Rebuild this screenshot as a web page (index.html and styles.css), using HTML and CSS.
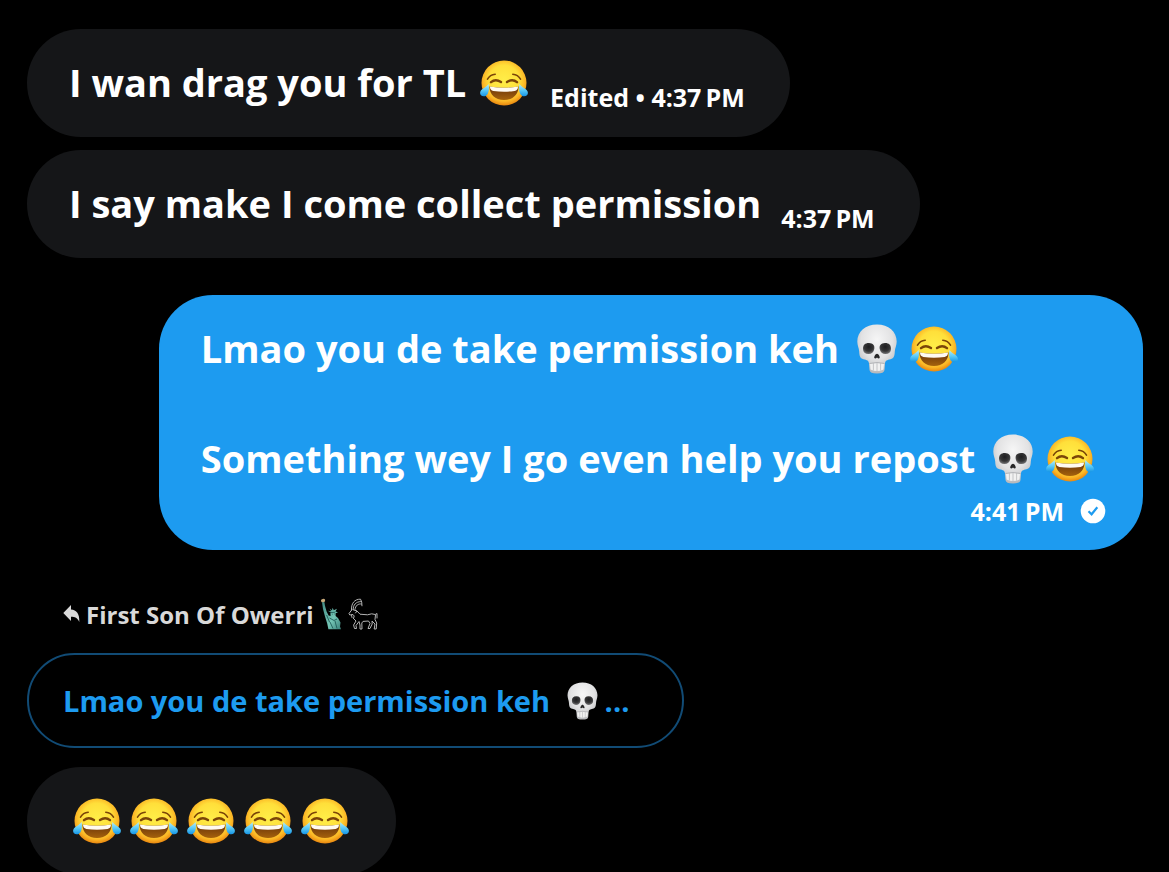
FILE: index.html
```
<!DOCTYPE html>
<html lang="en">
<head>
<meta charset="UTF-8" />
<meta name="viewport" content="width=device-width, initial-scale=1" />
<title>Messages</title>
<link rel="stylesheet" href="styles.css">
</head>
<body>
  <svg class="sprites" aria-hidden="true">
    <defs>
      <radialGradient id="face" cx="50%" cy="44%" r="56%">
        <stop offset="0" stop-color="#ffee48" />
        <stop offset="0.6" stop-color="#ffdf3a" />
        <stop offset="0.84" stop-color="#fbb525" />
        <stop offset="1" stop-color="#e8860f" />
      </radialGradient>
      <linearGradient id="tear" x1="0" y1="0" x2="0" y2="1">
        <stop offset="0" stop-color="#b4ecfb" />
        <stop offset="0.5" stop-color="#5ccbf7" />
        <stop offset="1" stop-color="#1595e6" />
      </linearGradient>
      <linearGradient id="mouth" x1="0" y1="0" x2="0" y2="1">
        <stop offset="0" stop-color="#68330a" />
        <stop offset="1" stop-color="#a5620c" />
      </linearGradient>
      <radialGradient id="bone" cx="50%" cy="32%" r="66%">
        <stop offset="0" stop-color="#f6f6f6" />
        <stop offset="0.6" stop-color="#e2e2e3" />
        <stop offset="1" stop-color="#b9babd" />
      </radialGradient>
      <radialGradient id="socket" cx="50%" cy="35%" r="65%">
        <stop offset="0" stop-color="#1d1d1f" />
        <stop offset="0.6" stop-color="#353536" />
        <stop offset="1" stop-color="#777779" />
      </radialGradient>
      <linearGradient id="copper" x1="0" y1="0" x2="1" y2="1">
        <stop offset="0" stop-color="#438b84" />
        <stop offset="0.6" stop-color="#74c5b5" />
        <stop offset="1" stop-color="#3b827b" />
      </linearGradient>
    </defs>

    <symbol id="joy" viewBox="0 0 48 50">
      <circle cx="24" cy="25" r="22.5" fill="url(#face)" />
      <g fill="none" stroke="#7b4508" stroke-linecap="round">
        <path d="M7.5 21.2Q10 16.5 15.2 16.2M32.8 16.2Q38 16.5 40.5 21.2" stroke-width="1.6" />
        <path d="M11 24.2Q15.5 20.4 21 24M27 24Q32.5 20.4 37 24.2" stroke-width="2.4" />
      </g>
      <path d="M9.5 28.5Q24 31 38.5 28.5C38.5 36.5 33 42 24 42S9.5 36.5 9.5 28.5Z" fill="url(#mouth)" />
      <path d="M10 28.6Q24 31 38 28.6Q38.2 32.2 34.6 32.9Q24 34.4 13.4 32.9Q9.8 32.2 10 28.6Z" fill="#fffaf1" />
      <path d="M8.6 26C9.6 31 8.6 38.2 3.9 38.3C.6 38.4-.6 35.6.5 33.2C1.8 30.5 5.8 29.6 8.6 26Z" fill="url(#tear)" />
      <path d="M39.4 26C38.4 31 39.4 38.2 44.1 38.3C47.4 38.4 48.6 35.6 47.5 33.2C46.2 30.5 42.2 29.6 39.4 26Z" fill="url(#tear)" />
    </symbol>

    <symbol id="skull" viewBox="0 0 48 50">
      <path d="M24 .5C12.5.5 4.3 7.5 4.3 17.5C4.3 21.5 6 24 6.2 27.5C6.4 31.5 6.8 34.2 10.5 35.2C14 36 15.7 36.4 16 39.5L16.5 46Q16.8 49.5 24 49.5T31.5 46L32 39.5C32.3 36.4 34 36 37.5 35.2C41.2 34.2 41.6 31.5 41.8 27.5C42 24 43.7 21.5 43.7 17.5C43.7 7.5 35.5.5 24 .5Z" fill="url(#bone)" />
      <path d="M10 25C9.8 20.8 12.2 18.8 16 18.9C20 19 22 21.2 21.3 25C20.6 28.5 18.5 30.2 15.4 30.1C12.2 30 10.1 28.3 10 25Z" fill="url(#socket)" />
      <path d="M38 25C38.2 20.8 35.8 18.8 32 18.9C28 19 26 21.2 26.7 25C27.4 28.5 29.5 30.2 32.6 30.1C35.8 30 37.9 28.3 38 25Z" fill="url(#socket)" />
      <path d="M24 29.8C22.5 29.8 20.7 33.2 21.4 34.1C22 34.8 23.3 34.2 24 33.5C24.7 34.2 26 34.8 26.6 34.1C27.3 33.2 25.5 29.8 24 29.8Z" fill="#262627" />
      <path d="M17 39.5Q24 38 31 39.5L30.4 45.5Q24 48.5 17.6 45.5Z" fill="#f1f1f1" />
      <path d="M16.5 39.5Q24 37.7 31.5 39.5" fill="none" stroke="#a5a6aa" stroke-width=".8" />
      <path d="M20.4 39V46.5M24 38.6V47M27.6 39V46.5" stroke="#b9babd" stroke-width=".8" />
    </symbol>

    <symbol id="liberty" viewBox="0 0 22 32">
      <path d="M1.2 3.5Q.4 1.8 2 1.2Q4.4.2 5.2 2Q5 3.7 4 4.4H2Z" fill="#c9a979" />
      <path d="M2 4.2H4.4L4.9 7.5L6.6 13.5L8.6 17.6L10.6 18L10.4 15.5L10.8 14.2L7.6 12.8L11.2 13.2L9.6 10.6L12 12.4L12.6 9.8L13.8 12.2L17 10.8L15.4 13.6L18 14.2L15.6 15.2L15.6 18L18 20L20.5 24.5L20 28.5L21 31.2H8.4L7.2 25.5L5 18.5L3 11Z" fill="url(#copper)" />
      <path d="M11 14.6L15.2 14.2M12 16.2H12.6M14 16H14.6M9.5 20L14 22.5L17 21M10 24L13 30.5M15 23L17 30.5M6.6 17L9.5 24" fill="none" stroke="#1f5c58" stroke-width=".9" />
    </symbol>

    <symbol id="goat" viewBox="0 0 30 32">
      <g fill="none" stroke="#b4b4b4" stroke-width="1" stroke-linecap="round" stroke-linejoin="round">
        <path d="M3.5 12C3 5.5 6.5 1 12.5 1.2Q14.2 3.4 14 7.8M5.2 11.5C5 7 8 3.6 12.5 3.6M7 11.5C7.5 7.5 10 5.4 13.4 6" />
        <path d="M3.8 11.8L1 15.5L1.8 17L5 16.5L6.2 18L5.5 20.5M5.2 11.8L9 13L7.5 15M9 13L12 16.2L19.5 16.8Q24 15 27.2 16.5L29 15.5L29 20M3.5 17L4 19.5" />
        <path d="M5.5 20.5L8 23L5.6 27L6.5 30.5H8.5L8 27.5L11 23.5L12 27V31H14L13.8 25L15 23.4L20.5 23L22 25.5L20 30.5H22L24.2 26L24 23L27 26L26.2 31H28.2L28.7 25L27 21.5L27.5 17" />
      </g>
    </symbol>
  </svg>

  <main class="chat" aria-label="Conversation">
    <article class="bubble received">
      <p class="text">I wan drag you for TL <svg class="emoji" role="img" aria-label="Laughing with tears"><use href="#joy" /></svg></p>
      <span class="meta">Edited • <time>4:37&#8201;PM</time></span>
    </article>

    <article class="bubble received">
      <p class="text">I say make I come collect permission</p>
      <span class="meta"><time>4:37&#8201;PM</time></span>
    </article>

    <article class="bubble sent">
      <p class="text">Lmao you de take permission keh <svg class="emoji" role="img" aria-label="Skull"><use href="#skull" /></svg><svg class="emoji" role="img" aria-label="Laughing with tears"><use href="#joy" /></svg></p>
      <p class="text">Something wey I go even help you repost <svg class="emoji" role="img" aria-label="Skull"><use href="#skull" /></svg><svg class="emoji" role="img" aria-label="Laughing with tears"><use href="#joy" /></svg></p>
      <span class="meta">
        <time>4:41&#8201;PM</time>
        <svg class="status" viewBox="0 0 26 26" role="img" aria-label="Sent">
          <circle cx="13" cy="13" r="12.3" fill="#fff" />
          <path d="M8.5 13.3L11.6 16.3L17.3 9.2" fill="none" stroke="#1d9bf0" stroke-width="2.2" />
        </svg>
      </span>
    </article>

    <div class="reply-to">
      <svg class="reply-icon" viewBox="0 0 17 18" aria-hidden="true">
        <path d="M8 0V4.5C13.5 5 16.7 8.5 16.3 17C14.5 13 12 11.8 8 11.8V16L.3 8Z" fill="#d9d9d9" />
      </svg>
      <span>First Son Of Owerri</span>
      <svg class="liberty" role="img" aria-label="Statue of Liberty"><use href="#liberty" /></svg>
      <svg class="goat" role="img" aria-label="Goat"><use href="#goat" /></svg>
    </div>

    <blockquote class="quote">Lmao you de take permission keh <svg class="emoji" role="img" aria-label="Skull"><use href="#skull" /></svg>...</blockquote>

    <article class="bubble received">
      <p class="text" aria-label="Five laughing faces"><svg class="emoji"><use href="#joy" /></svg><svg class="emoji"><use href="#joy" /></svg><svg class="emoji"><use href="#joy" /></svg><svg class="emoji"><use href="#joy" /></svg><svg class="emoji"><use href="#joy" /></svg></p>
    </article>
  </main>
</body>
</html>
```
FILE: styles.css
```
:root {
  --background: #000000;
  --received-bg: #151618;
  --sent-bg: #1d9bf0;
  --quote-border: #114b75;
  --primary-text: #ffffff;
  --secondary-text: #d9d9d9;
  --font-family: 'Open Sans', 'Noto Sans', sans-serif;
}
*, *::before, *::after {
  box-sizing: border-box;
}
body {
  margin: 0;
  background-color: var(--background);
  color: var(--primary-text);
  font-family: var(--font-family);
  font-weight: 700;
}
.sprites {
  display: block;
  width: 0;
  height: 0;
}
.chat {
  display: flex;
  flex-direction: column;
  align-items: flex-start;
  height: 100vh;
  padding: 29px 26px 0 27px;
  overflow: hidden;
}
.bubble {
  display: flex;
  flex-shrink: 0;
  align-items: flex-end;
  gap: 20px;
  border-radius: 54px;
}
.received {
  min-height: 108px;
  margin-bottom: 13px;
  padding: 26px 45px 27px 42px;
  background-color: var(--received-bg);
}
.sent {
  flex-direction: column;
  align-items: flex-start;
  align-self: flex-end;
  gap: 0;
  margin: 24px 0 48px;
  padding: 26px 37px 26px 42px;
  background-color: var(--sent-bg);
}
.text {
  margin: 0;
  font-size: 38px;
  line-height: 55px;
}
.sent .text {
  padding-right: 7px;
}
.sent .text + .text {
  margin-top: 55px;
}
.emoji {
  width: 48px;
  height: 50px;
  margin: 0 5px 0 4px;
  vertical-align: -11px;
}
.received .emoji:last-child {
  margin-right: 2px;
}
.meta {
  font-size: 25px;
  line-height: 26px;
}
.sent .meta {
  display: flex;
  align-items: center;
  align-self: flex-end;
  gap: 16px;
  margin-top: 12px;
}
.status {
  width: 26px;
  height: 26px;
}
.reply-to {
  display: flex;
  align-items: center;
  height: 32px;
  margin-bottom: 23px;
  padding-left: 36px;
  color: var(--secondary-text);
  font-size: 24px;
}
.reply-icon {
  width: 17px;
  height: 18px;
  margin-right: 6px;
}
.liberty {
  width: 22px;
  height: 32px;
  margin: 0 6px;
}
.goat {
  width: 30px;
  height: 32px;
}
.quote {
  flex-shrink: 0;
  margin: 0 0 19px;
  padding: 27px 53px 26px 34px;
  border: 2px solid var(--quote-border);
  border-radius: 48px;
  color: var(--sent-bg);
  font-size: 29px;
  line-height: 38px;
}
.quote .emoji {
  width: 37px;
  height: 38px;
  margin: 0 4px 0 6px;
  vertical-align: -8px;
}
```
